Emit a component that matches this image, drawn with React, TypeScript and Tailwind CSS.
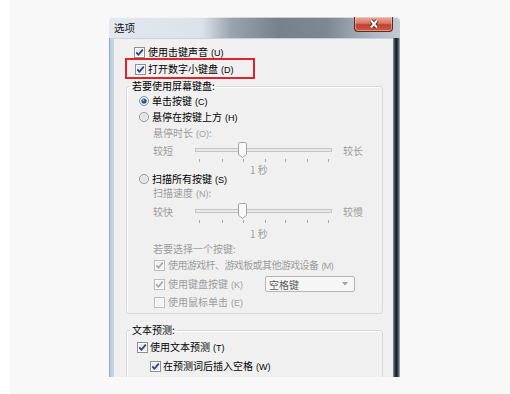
import React from "react";

const ticks = [7, 30, 51, 73, 93, 115, 136];

function Key({ k }: { k: string }) {
  return <span className="ml-[3px] font-['Liberation_Sans',sans-serif] text-[9px]">({k})</span>;
}

function Check({ checked = false, disabled = false }: { checked?: boolean; disabled?: boolean }) {
  return (
    <svg width="11" height="11" viewBox="0 0 11 11" className="shrink-0">
      <rect x="0.5" y="0.5" width="10" height="10" fill="#ffffff" stroke={disabled ? "#bcbcbc" : "#8e8f8f"} />
      <rect x="2" y="2" width="7" height="7" fill={disabled ? "#f3f3f3" : "#e7eaee"} />
      {checked && (
        <path
          d="M2.3 5.4 L4.4 7.8 L8.8 2.6"
          fill="none"
          stroke={disabled ? "#a8a8a8" : "#25408c"}
          strokeWidth="1.7"
        />
      )}
    </svg>
  );
}

function Radio({ checked = false }: { checked?: boolean }) {
  return (
    <svg width="10" height="10" viewBox="0 0 10 10" className="shrink-0">
      <circle cx="5" cy="5" r="4.5" fill="#f6f6f6" stroke="#8e8f8f" />
      <circle cx="5" cy="5" r="3.2" fill="#e1e3e6" />
      {checked && (
        <>
          <circle cx="5" cy="5" r="2.6" fill="#1f5794" />
          <circle cx="4.4" cy="4.3" r="1" fill="#8fc3ef" />
        </>
      )}
    </svg>
  );
}

function Slider() {
  return (
    <svg width="145" height="22" viewBox="0 0 145 22" className="shrink-0">
      <rect x="3.5" y="6.5" width="136" height="3" fill="#e9e9e9" stroke="#c4c4c4" />
      {ticks.map((x) => (
        <line key={x} x1={x + 0.5} x2={x + 0.5} y1="17" y2="20" stroke="#a9a9a9" />
      ))}
      <path
        d="M46.5 1.8 Q46.5 0.5 47.8 0.5 H53.2 Q54.5 0.5 54.5 1.8 V12.3 L50.5 15.5 L46.5 12.3 Z"
        fill="#f8f8f8"
        stroke="#a3a3a3"
      />
    </svg>
  );
}

function SliderRow({ left, right }: { left: string; right: string }) {
  return (
    <div className="h-[22px] flex items-start pl-[26px] text-[#9d9d9d]">
      <span className="w-[39px] h-[16px] flex items-center">{left}</span>
      <Slider />
      <span className="ml-[6px] h-[16px] flex items-center">{right}</span>
    </div>
  );
}

export default function App() {
  return (
    <div className="w-[510px] h-[394px] bg-white pl-[10px] overflow-hidden font-['Noto_Sans_CJK_SC','Liberation_Sans',sans-serif]">
      <div className="h-full pt-[17px] pl-[99px] bg-[#f8f8f8]">
        <div className="w-[291px] h-[360px] flex flex-col overflow-hidden rounded-t-[5px]">
          {/* title bar */}
          <div className="h-[21px] shrink-0 flex items-start justify-between bg-[linear-gradient(90deg,#e2e8ee_0%,#dbe2e9_32%,#9aa4ae_42%,#77818c_58%,#7d8893_75%,#a7b1bb_88%,#c3ccd5_100%)] shadow-[inset_0_1px_0_rgba(255,255,255,0.6)]">
            <span className="pl-[5px] leading-[21px] text-[10.5px] text-[#111]">选项</span>
            <div className="mr-[7px] w-[39px] h-[15px] flex items-center justify-center rounded-b-[4px] border border-t-0 border-[#5e2a24] bg-[linear-gradient(180deg,#eab0a2_0%,#d87663_45%,#c1412f_55%,#c95c42_100%)] shadow-[inset_0_0_0_1px_rgba(255,220,210,0.45)]">
              <svg width="12" height="10" viewBox="0 0 12 10">
                <path d="M3 1.5 L9 8.5 M9 1.5 L3 8.5" stroke="#5a1d17" strokeWidth="3.6" />
                <path d="M3 1.5 L9 8.5 M9 1.5 L3 8.5" stroke="#ffffff" strokeWidth="2" />
              </svg>
            </div>
          </div>

          <div className="flex flex-1 min-h-0">
            <div className="w-[4px] bg-[linear-gradient(90deg,#8096ad_0%,#b6cde4_35%,#c5d8ec_100%)]" />

            {/* client area */}
            <div className="relative w-[280px] bg-[#f0f0f0] shadow-[inset_1px_1px_0_#c9d1da] pt-[6px] text-[10px] text-black">
              <div className="h-[16px] flex items-center pl-[21px] gap-[3px]">
                <Check checked />
                <span>使用击键声音<Key k="U" /></span>
              </div>
              <div className="h-[18px] flex items-center pl-[22px] gap-[2px]">
                <Check checked />
                <span>打开数字小键盘<Key k="D" /></span>
              </div>

              <fieldset className="mt-[1px] ml-[13px] mr-[10px] pb-[2px] border border-[#d5d9de] rounded-[3px] shadow-[inset_1px_1px_0_#ffffff]">
                <legend className="ml-[3px] px-[2px] leading-[14px]">若要使用屏幕键盘:</legend>

                <div className="h-[16px] flex items-center pl-[12px] gap-[3px]">
                  <Radio checked />
                  <span>单击按键<Key k="C" /></span>
                </div>
                <div className="h-[16px] flex items-center pl-[12px] gap-[3px]">
                  <Radio />
                  <span>悬停在按键上方<Key k="H" /></span>
                </div>
                <div className="h-[17px] flex items-center pl-[26px] text-[#9d9d9d]">
                  <span>悬停时长<Key k="O" />:</span>
                </div>
                <SliderRow left="较短" right="较长" />
                <div className="h-[10px] flex items-center pl-[123px] text-[#9d9d9d]">
                  <span>1 秒</span>
                </div>
                <div className="h-[10px] flex items-center pl-[12px] gap-[3px]">
                  <Radio />
                  <span>扫描所有按键<Key k="S" /></span>
                </div>
                <div className="h-[19px] flex items-center pl-[26px] text-[#9d9d9d]">
                  <span>扫描速度<Key k="N" />:</span>
                </div>
                <SliderRow left="较快" right="较慢" />
                <div className="h-[16px] flex items-center pl-[123px] text-[#9d9d9d]">
                  <span>1 秒</span>
                </div>
                <div className="h-[14px] flex items-center pl-[26px] text-[#9d9d9d]">
                  <span>若要选择一个按键:</span>
                </div>
                <div className="h-[20px] flex items-center pl-[27px] gap-[3px] text-[#9d9d9d]">
                  <Check checked disabled />
                  <span className="tracking-[-0.6px]">使用游戏杆、游戏板或其他游戏设备<Key k="M" /></span>
                </div>
                <div className="h-[18px] flex items-center pl-[27px] gap-[3px] text-[#9d9d9d]">
                  <Check checked disabled />
                  <span className="w-[94px]">使用键盘按键<Key k="K" /></span>
                  <div className="w-[90px] h-[16px] flex items-center justify-between pl-[3px] pr-[6px] border border-[#b5b5b5] rounded-[2px] bg-[#f6f6f6] text-[#5f5f5f]">
                    <span>空格键</span>
                    <svg width="6" height="4" viewBox="0 0 6 4">
                      <path d="M0 0 H6 L3 3.5 Z" fill="#a2a2a2" />
                    </svg>
                  </div>
                </div>
                <div className="h-[18px] flex items-center pl-[27px] gap-[3px] text-[#9d9d9d]">
                  <Check disabled />
                  <span>使用鼠标单击<Key k="E" /></span>
                </div>
              </fieldset>

              <fieldset className="mt-[9px] ml-[13px] mr-[10px] pb-[8px] border border-[#d5d9de] rounded-[3px] shadow-[inset_1px_1px_0_#ffffff]">
                <legend className="ml-[3px] px-[2px] leading-[14px]">文本预测:</legend>
                <div className="h-[21px] flex items-center pl-[10px] gap-[2px]">
                  <Check checked />
                  <span>使用文本预测<Key k="T" /></span>
                </div>
                <div className="h-[16px] flex items-center pl-[23px] gap-[2px]">
                  <Check checked />
                  <span>在预测词后插入空格<Key k="W" /></span>
                </div>
              </fieldset>

              {/* red highlight annotation */}
              <div className="absolute left-[12px] top-[20px] w-[130px] h-[21px] border-2 border-[#e1232a] pointer-events-none" />
            </div>

            <div className="w-[7px] bg-[linear-gradient(90deg,#8d98a3_0%,#2a3139_30%,#1a1f24_55%,#56626e_80%,#a9c1d9_100%)]" />
          </div>
        </div>
      </div>
    </div>
  );
}
